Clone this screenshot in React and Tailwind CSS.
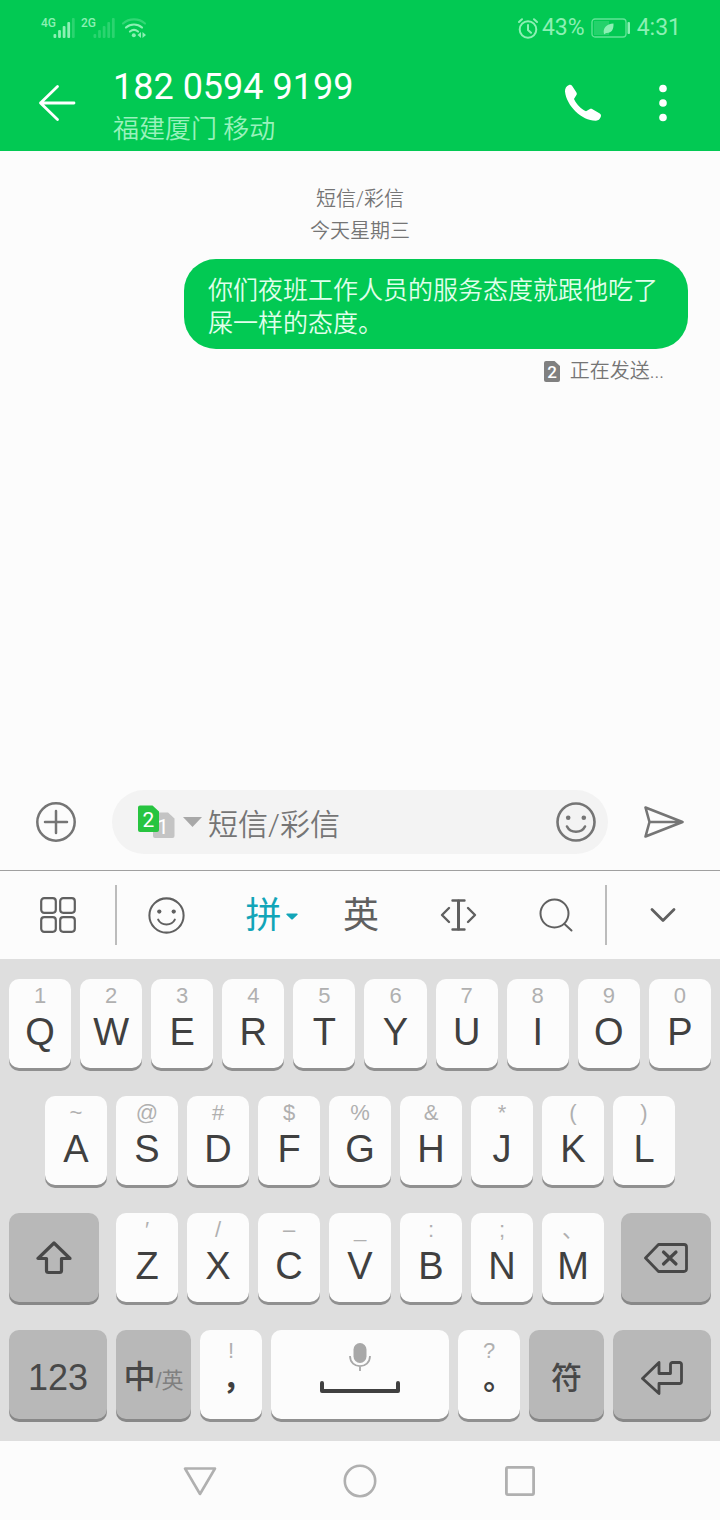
import React, { useState } from "react";

const rowOne = [
  ["Q", "1"],
  ["W", "2"],
  ["E", "3"],
  ["R", "4"],
  ["T", "5"],
  ["Y", "6"],
  ["U", "7"],
  ["I", "8"],
  ["O", "9"],
  ["P", "0"],
];

const rowTwo = [
  ["A", "~"],
  ["S", "@"],
  ["D", "#"],
  ["F", "$"],
  ["G", "%"],
  ["H", "&"],
  ["J", "*"],
  ["K", "("],
  ["L", ")"],
];

const rowThree = [
  ["Z", "′"],
  ["X", "/"],
  ["C", "–"],
  ["V", "_"],
  ["B", ":"],
  ["N", ";"],
  ["M", "、"],
];

const keyBase =
  "h-[89px] min-w-0 rounded-[10px] flex flex-col items-center cursor-pointer";
const lightKey = `${keyBase} bg-[#fcfcfc] text-[#404040] shadow-[0_3px_0_#909090]`;
const darkKey = `${keyBase} justify-center bg-[#b8b8b8] text-[#484848] shadow-[0_3px_0_#888888]`;

// Network label and five signal bars, the bars above the level are dimmed
const Signal = ({ label, level }) => (
  <div className="flex items-start">
    <span className="-mr-[3px] text-[12px] leading-[10px] font-medium">{label}</span>
    <svg width="22" height="20" viewBox="0 0 22 20" fill="currentColor">
      {[0, 1, 2, 3, 4].map((i) => (
        <rect
          key={i}
          x={0.5 + i * 4.6}
          y={16 - i * 4}
          width="2.8"
          height={4 + i * 4}
          rx="1"
          opacity={i < level ? 1 : 0.3}
        />
      ))}
    </svg>
  </div>
);

const StatusBar = () => (
  <div className="flex items-center justify-between h-14 pl-[41px] pr-[39px] text-[#8cf0b4]">
    <div className="flex items-center gap-[6px]">
      <Signal label="4G" level={4} />
      <Signal label="2G" level={0} />
      <svg width="26" height="20" viewBox="0 0 26 20" fill="none" stroke="currentColor" strokeWidth="2.2" strokeLinecap="round">
        <path d="M2 5.5C8 0 18 0 24 5.5" opacity="0.35" />
        <path d="M5 9.5c4.6-4 11.4-4 16 0" />
        <path d="M9 13.5c2.500-2 5.500-2 8 0" />
        <circle cx="12.8" cy="17.300" r="2" fill="currentColor" stroke="none" />
        <path d="M20 14v6l-3.500-3zM21.500 14v6l3.500-3z" fill="currentColor" stroke="none" />
      </svg>
    </div>
    <div className="flex items-center text-[23px] leading-7">
      <svg width="20" height="21" viewBox="0 0 20 21" fill="none" stroke="currentColor" strokeWidth="2" strokeLinecap="round">
        <circle cx="10" cy="11.5" r="8.3" />
        <path d="M10 7v5l3 2.800M1 4l3-2.800M19 4l-3-2.800" />
      </svg>
      <span className="ml-1">43%</span>
      <svg className="ml-[6px]" width="40" height="20" viewBox="0 0 40 20" fill="none">
        <rect x="1" y="1" width="34" height="18" rx="3" stroke="currentColor" strokeWidth="1.3" opacity="0.7" />
        <rect x="3" y="3" width="15" height="14" fill="currentColor" opacity="0.25" />
        <path d="M13 16c-1.500-6 2.500-10 9.500-10.500c.300 6-2 10-7.500 9.500l-1.500 1.200z" fill="currentColor" />
        <rect x="36.5" y="4" width="2.5" height="12" rx="1" fill="currentColor" />
      </svg>
      <span className="ml-[6px]">4:31</span>
    </div>
  </div>
);

const ChatHeader = () => (
  <div className="flex items-center h-[95px] pl-[38px] pr-[51px] pb-px text-white">
    <button type="button" aria-label="返回" className="cursor-pointer">
      <svg width="38" height="38" viewBox="0 0 38 38" fill="none" stroke="currentColor" strokeWidth="2.8" strokeLinecap="round" strokeLinejoin="round">
        <path d="M19.500 2.500L2.500 19l17 16.500M2.500 19H36" />
      </svg>
    </button>
    <div className="flex-1 min-w-0 pt-[9px] pl-[37px]">
      <h1 className="text-[36px] leading-[42px]">182 0594 9199</h1>
      <p className="text-[26px] leading-[42px] font-[350] text-[#99f2bc]">福建厦门 移动</p>
    </div>
    <button type="button" aria-label="拨打电话" className="cursor-pointer">
      <svg width="38" height="38" viewBox="0 0 38 38" fill="currentColor">
        <path d="M5 .9C6.300 .5 7.400 .8 8.200 2L12.300 8.300c.8 1.200 .7 2.300-.2 3.300L10 15C13 21 16.500 24.500 22 27.200L25.500 25.300c1-.6 2-.6 3 0L35.800 29.600c1.300 .8 1.500 2 .9 3.400C35.700 35.500 34.500 36.400 32 36.700C18 37 2.500 22 1 7.500C.8 4.500 2.300 1.800 5 .9z" />
      </svg>
    </button>
    <button type="button" aria-label="更多" className="ml-[55px] cursor-pointer">
      <svg width="12" height="38" viewBox="0 0 12 38" fill="currentColor">
        <circle cx="6" cy="4.5" r="3.8" />
        <circle cx="6" cy="19" r="3.8" />
        <circle cx="6" cy="33.5" r="3.8" />
      </svg>
    </button>
  </div>
);

const Smiley = ({ size, stroke }) => (
  <svg width={size} height={size} viewBox="0 0 40 40" fill="none" stroke="currentColor" strokeWidth={stroke} strokeLinecap="round">
    <circle cx="20" cy="20" r="18.5" />
    <path d="M11 24.500c3.500 7 14.500 7 18 0" />
    <circle cx="12.2" cy="15.8" r="2.3" fill="currentColor" stroke="none" />
    <circle cx="27.8" cy="15.8" r="2.3" fill="currentColor" stroke="none" />
  </svg>
);

const Messages = () => (
  <main className="flex-1 flex flex-col pt-8">
    <div className="text-center text-[20px] leading-8 font-[350] text-[#757575]">
      <p>短信/彩信</p>
      <p>今天星期三</p>
    </div>
    <div className="self-end max-w-[70%] mt-3 mr-8 px-6 pt-[15px] pb-[9px] rounded-[32px] bg-[#02c953] text-[#e0ffeb] text-[25px] leading-[33px] font-[350]">
      你们夜班工作人员的服务态度就跟他吃了屎一样的态度。
    </div>
    <div className="self-end flex items-center gap-[10px] mt-2 mr-14 text-[20px] leading-7 font-[350] text-[#757575]">
      <svg width="16" height="21" viewBox="0 0 16 21">
        <path d="M2 0h8.500l5.500 5v14a2 2 0 0 1-2 2H2a2 2 0 0 1-2-2V2a2 2 0 0 1 2-2z" fill="#808080" />
        <text x="8" y="16.500" textAnchor="middle" fontSize="17" fontWeight="500" fill="#ffffff">2</text>
      </svg>
      <span>正在发送...</span>
    </div>
  </main>
);

const Composer = () => {
  const [text, setText] = useState("");

  return (
    <form
      onSubmit={(e) => e.preventDefault()}
      className="flex items-center gap-9 px-9 pb-4 text-[#757575]"
    >
      <button type="button" aria-label="添加" className="cursor-pointer">
        <svg width="40" height="40" viewBox="0 0 40 40" fill="none" stroke="currentColor" strokeWidth="2.5" strokeLinecap="round">
          <circle cx="20" cy="20" r="18.7" />
          <path d="M20 9v22M9 20h22" />
        </svg>
      </button>
      <div className="flex-1 min-w-0 flex items-center h-16 pl-[26px] pr-3 rounded-full bg-[#f3f3f3]">
        <button type="button" aria-label="选择SIM卡" className="flex items-center gap-2 cursor-pointer">
          <svg width="37" height="34" viewBox="0 0 37 34">
            <path d="M17 7.500h13l6.500 6V31a2 2 0 0 1-2 2H17a2 2 0 0 1-2-2V9.500a2 2 0 0 1 2-2z" fill="#c4c4c4" />
            <text x="25" y="28.500" textAnchor="middle" fontSize="21" fill="#ffffff">1</text>
            <path d="M2 .5h12.500l6.500 6V25a2 2 0 0 1-2 2H2a2 2 0 0 1-2-2V2.500a2 2 0 0 1 2-2z" fill="#27c440" />
            <text x="10.500" y="22" textAnchor="middle" fontSize="21" fill="#ffffff">2</text>
          </svg>
          <svg width="19" height="10" viewBox="0 0 19 10" fill="#a8a8a8">
            <path d="M0 0h19L9.500 10z" />
          </svg>
        </button>
        <input
          type="text"
          aria-label="短信/彩信"
          placeholder="短信/彩信"
          value={text}
          onChange={(e) => setText(e.target.value)}
          className="flex-1 min-w-0 ml-[6px] pt-1 text-[30px] font-[350] outline-none placeholder:text-[#757575]"
        />
        <button type="button" aria-label="表情" className="cursor-pointer">
          <Smiley size={40} stroke={2.6} />
        </button>
      </div>
      <button type="submit" aria-label="发送" className="cursor-pointer">
        <svg width="40" height="40" viewBox="0 0 40 40" fill="none" stroke="currentColor" strokeWidth="2.6" strokeLinejoin="round">
          <path d="M1.500 5.500L38.500 20L1.500 34.500L5.500 20zM5.500 20h33" />
        </svg>
      </button>
    </form>
  );
};

const Toolbar = () => (
  <div className="flex items-center h-[89px] border-t border-[#a0a0a0] text-[#606060]">
    <button type="button" aria-label="菜单" className="flex-[116] flex justify-center cursor-pointer">
      <svg width="36" height="36" viewBox="0 0 36 36" fill="none" stroke="currentColor" strokeWidth="2.2">
        <rect x="1.2" y="1.2" width="14.600" height="14.6" rx="3" />
        <rect x="20.2" y="1.2" width="14.6" height="14.6" rx="3" />
        <rect x="1.2" y="20.2" width="14.6" height="14.6" rx="3" />
        <rect x="20.2" y="20.2" width="14.6" height="14.6" rx="3" />
      </svg>
    </button>
    <div className="flex-[490] flex items-center h-[60px] border-x-2 border-[#bcbcbc]">
      <button type="button" aria-label="表情" className="flex-1 flex justify-center cursor-pointer">
        <Smiley size={37} stroke={2.2} />
      </button>
      <button type="button" className="flex-1 flex items-center justify-center pt-0.5 text-[36px] leading-10 text-[#12a5b8] cursor-pointer">
        拼
        <svg className="ml-1 -mr-4" width="12" height="7" viewBox="0 0 12 7" fill="currentColor">
          <path d="M1 .5h10a.7 .7 0 0 1 .5 1.200L7 6a1.400 1.400 0 0 1-2 0L.5 1.700A.7 .7 0 0 1 1 .5z" />
        </svg>
      </button>
      <button type="button" className="flex-1 pt-0.5 text-center text-[36px] leading-10 cursor-pointer">英</button>
      <button type="button" aria-label="移动光标" className="flex-1 flex justify-center cursor-pointer">
        <svg width="37" height="32" viewBox="0 0 37 32" fill="none" stroke="currentColor" strokeWidth="2.4" strokeLinecap="round" strokeLinejoin="round">
          <path d="M9 9L2 16l7 7M28 9l7 7-7 7M12.500 1.500h12M12.500 30.500h12" />
          <path d="M18.500 2v28" strokeWidth="3" />
        </svg>
      </button>
      <button type="button" aria-label="搜索" className="flex-1 flex justify-center cursor-pointer">
        <svg width="34" height="34" viewBox="0 0 34 34" fill="none" stroke="currentColor" strokeWidth="2" strokeLinecap="round">
          <circle cx="15.5" cy="15.5" r="14" />
          <path d="M25.500 26l7 6.500" />
        </svg>
      </button>
    </div>
    <button type="button" aria-label="收起键盘" className="flex-[114] flex justify-center cursor-pointer">
      <svg width="26" height="16" viewBox="0 0 26 16" fill="none" stroke="currentColor" strokeWidth="2.8" strokeLinecap="round" strokeLinejoin="round">
        <path d="M2 2.500l11 11 11-11" />
      </svg>
    </button>
  </div>
);

const LetterKey = ({ letter, hint }) => (
  <button type="button" className={`${lightKey} flex-[62] pt-[5px]`}>
    <span className="text-[22px] leading-6 text-[#b0b0b0]">{hint}</span>
    <span className="text-[38px] leading-[48px]">{letter}</span>
  </button>
);

const PunctuationKey = ({ mark, hint }) => (
  <button type="button" className={`${lightKey} flex-[62] pt-[9px]`}>
    <span className="text-[22px] leading-6 text-[#b0b0b0]">{hint}</span>
    <span className="font-['Noto_Sans_CJK_TC',sans-serif] font-bold text-[30px] leading-[44px]">{mark}</span>
  </button>
);

const Keyboard = () => (
  <div className="flex flex-col gap-7 px-[9px] pt-5 pb-[22px] bg-[#dedede] font-['Liberation_Sans','Noto_Sans_CJK_SC',sans-serif]">
    <div className="flex gap-[9px]">
      {rowOne.map(([letter, hint]) => (
        <LetterKey key={letter} letter={letter} hint={hint} />
      ))}
    </div>
    <div className="flex gap-[9px] px-9">
      {rowTwo.map(([letter, hint]) => (
        <LetterKey key={letter} letter={letter} hint={hint} />
      ))}
    </div>
    <div className="flex gap-[9px]">
      <button type="button" aria-label="大写" className={`${darkKey} flex-[90] mr-2`}>
        <svg width="36" height="34" viewBox="0 0 36 34" fill="none" stroke="currentColor" strokeWidth="3.2" strokeLinejoin="round">
          <path d="M18 2L2 17.500H10.500V29.500a2 2 0 0 0 2 2h11a2 2 0 0 0 2-2V17.500H34z" />
        </svg>
      </button>
      {rowThree.map(([letter, hint]) => (
        <LetterKey key={letter} letter={letter} hint={hint} />
      ))}
      <button type="button" aria-label="删除" className={`${darkKey} flex-[90] ml-2`}>
        <svg width="44" height="30" viewBox="0 0 44 30" fill="none" stroke="currentColor" strokeWidth="2.8" strokeLinecap="round" strokeLinejoin="round">
          <path d="M14.500 1.500H40a2.500 2.500 0 0 1 2.500 2.500v22a2.500 2.500 0 0 1-2.500 2.500H14.500L1.500 15z" />
          <path d="M19.500 9l12.500 12M32 9L19.500 21" strokeWidth="3.2" />
        </svg>
      </button>
    </div>
    <div className="flex gap-[9px]">
      <button type="button" className={`${darkKey} flex-[98] pt-1.5 text-[36px] leading-10`}>123</button>
      <button type="button" className={`${darkKey} flex-[75] pt-2`}>
        <span className="text-[32px] leading-10 font-medium whitespace-nowrap">
          中<span className="text-[22px] font-normal text-[#808080]">/英</span>
        </span>
      </button>
      <PunctuationKey mark="，" hint="!" />
      <button type="button" aria-label="空格" className={`${lightKey} flex-[178] pt-[13px] gap-[10px]`}>
        <svg width="22" height="28" viewBox="0 0 22 28" fill="none" stroke="#a8a8a8" strokeWidth="1.8">
          <rect x="4.5" y="0" width="13" height="20" rx="6.5" fill="#a8a8a8" stroke="none" />
          <path d="M1 13c0 13.500 20 13.500 20 0M11 23v5" />
        </svg>
        <svg width="80" height="12" viewBox="0 0 80 12" fill="none" stroke="currentColor" strokeWidth="4" strokeLinejoin="round" strokeLinecap="round">
          <path d="M2 2v8h76V2" />
        </svg>
      </button>
      <PunctuationKey mark="。" hint="?" />
      <button type="button" className={`${darkKey} flex-[75] pt-2 text-[31px] leading-10 font-medium`}>符</button>
      <button type="button" aria-label="换行" className={`${darkKey} flex-[98] pt-1.5`}>
        <svg width="42" height="34" viewBox="0 0 42 34" fill="none" stroke="currentColor" strokeWidth="2.8" strokeLinejoin="round">
          <path d="M18 1.500L1.500 17.500L18 32.500V22.500H38.500a2 2 0 0 0 2-2V3.500a2 2 0 0 0-2-2H31.500a2 2 0 0 0-2 2V12.500H18z" />
        </svg>
      </button>
    </div>
  </div>
);

const NavBar = () => (
  <nav className="flex items-center w-2/3 mx-auto h-[79px] text-[#b0b0b0]">
    <button type="button" aria-label="后退" className="flex-1 flex justify-center cursor-pointer">
      <svg width="34" height="30" viewBox="0 0 34 30" fill="none" stroke="currentColor" strokeWidth="2.6" strokeLinejoin="round">
        <path d="M2 2.500h30L17 28z" />
      </svg>
    </button>
    <button type="button" aria-label="主页" className="flex-1 flex justify-center cursor-pointer">
      <svg width="34" height="34" viewBox="0 0 34 34" fill="none" stroke="currentColor" strokeWidth="2.6">
        <circle cx="17" cy="17" r="15.2" />
      </svg>
    </button>
    <button type="button" aria-label="最近任务" className="flex-1 flex justify-center cursor-pointer">
      <svg width="30" height="30" viewBox="0 0 30 30" fill="none" stroke="currentColor" strokeWidth="2.8">
        <rect x="1.4" y="1.4" width="27.2" height="27.2" rx="1.5" />
      </svg>
    </button>
  </nav>
);

const App = () => {
  return (
    <div
      lang="zh-CN"
      className="min-h-screen flex flex-col bg-[#fcfcfc] font-[Roboto,'Noto_Sans_CJK_SC',sans-serif]"
    >
      <header className="bg-[#02c953]">
        <StatusBar />
        <ChatHeader />
      </header>
      <Messages />
      <Composer />
      <Toolbar />
      <Keyboard />
      <NavBar />
    </div>
  );
};

export default App;
